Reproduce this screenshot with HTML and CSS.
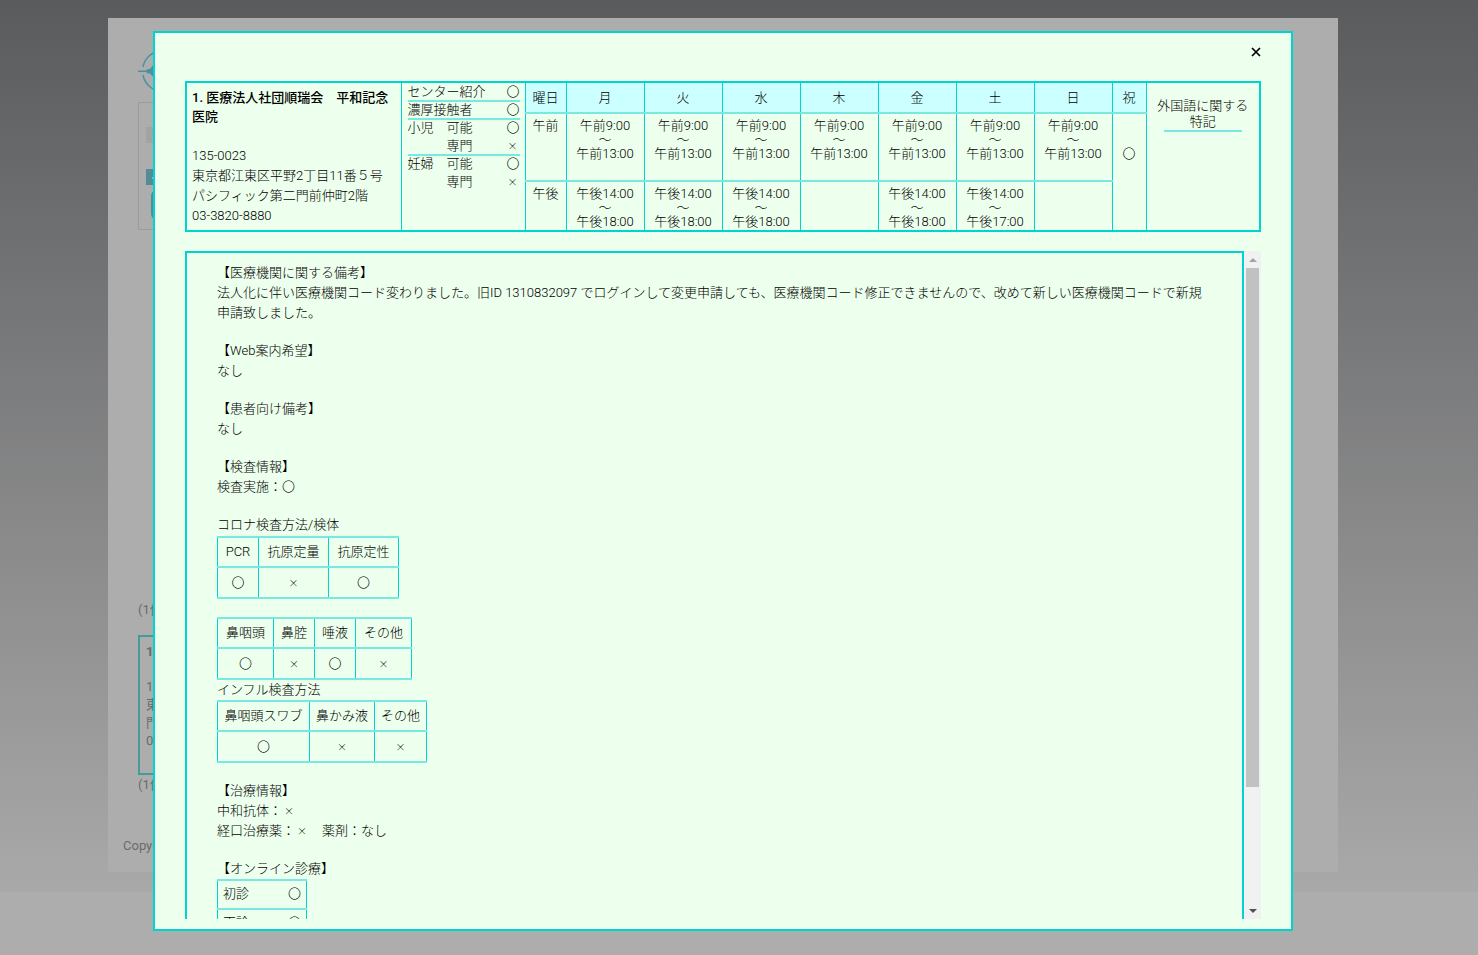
FILE: index.html
```html
<!DOCTYPE html>
<html lang="ja">
<head>
<meta charset="utf-8">
<title>診療・検査医療機関</title>
<link rel="stylesheet" href="styles.css">
</head>
<body>
<div class="backdrop">
  <div class="page">
    <header class="page-head">
      <svg class="logo" width="50" height="46" viewBox="0 0 50 46" aria-hidden="true">
        <path d="M5 19A20 20 0 0 1 21 3M29 3A20 20 0 0 1 45 19M45 27A20 20 0 0 1 29 43M21 43A20 20 0 0 1 5 27" fill="none" stroke="#4a92a0" stroke-width="1.5"/>
        <path d="M0 22.5H8L10 21H12L16 16V21.5L50 22.5V24L16 25V30L12 25.500H10L8 24H0Z" fill="#4a92a0"/>
      </svg>
    </header>
    <section class="filter">
      <div class="filter-tab"></div>
      <div class="filter-bar"><svg width="10" height="10" viewBox="0 0 10 10" aria-hidden="true"><path d="M1 6H8M4 3V9" stroke="#9fb4b9" stroke-width="2"/></svg></div>
      <div class="filter-pill"></div>
    </section>
    <p class="count">(1件</p>
    <section class="result">
      <strong>1. 医療</strong>
      <address>135-0023<br>東京都江東区<br>門前仲町2階<br>03-3820-8880</address>
    </section>
    <p class="count count-end">(1件</p>
    <footer class="copyright">Copyright</footer>
  </div>
</div>

<div class="overlay">
<div class="modal" role="dialog" aria-label="医療機関詳細">
  <div class="modal-head">
    <button class="close" type="button" aria-label="閉じる"><svg width="10" height="10" viewBox="0 0 10 10"><path d="M1 1L9 9M9 1L1 9" stroke="#000" stroke-width="1.7"/></svg></button>
  </div>

  <table class="schedule">
    <colgroup><col class="c-name"><col class="c-type"><col class="c-label"><col class="c-day" span="7"><col class="c-hol"><col class="c-lang"></colgroup>
    <tr class="r-head">
      <td class="clinic" rowspan="3"><strong>1. 医療法人社団順瑞会　平和記念医院</strong><address>135-0023<br>東京都江東区平野2丁目11番５号パシフィック第二門前仲町2階<br>03-3820-8880</address></td>
      <td class="types" rowspan="3">
        <dl>
          <div class="type line"><dt>センター紹介</dt><dd>〇</dd></div>
          <div class="type line"><dt>濃厚接触者</dt><dd>〇</dd></div>
          <div class="type"><dt>小児　可能</dt><dd>〇</dd></div>
          <div class="type line"><dt>　　　専門</dt><dd><i class="no">×</i></dd></div>
          <div class="type"><dt>妊婦　可能</dt><dd>〇</dd></div>
          <div class="type"><dt>　　　専門</dt><dd><i class="no">×</i></dd></div>
        </dl>
      </td>
      <th>曜日</th><th>月</th><th>火</th><th>水</th><th>木</th><th>金</th><th>土</th><th>日</th><th>祝</th>
      <td class="lang" rowspan="3">外国語に関する<br>特記</td>
    </tr>
    <tr class="r-am">
      <td class="time">午前</td>
      <td class="time">午前9:00<br>〜<br>午前13:00</td>
      <td class="time">午前9:00<br>〜<br>午前13:00</td>
      <td class="time">午前9:00<br>〜<br>午前13:00</td>
      <td class="time">午前9:00<br>〜<br>午前13:00</td>
      <td class="time">午前9:00<br>〜<br>午前13:00</td>
      <td class="time">午前9:00<br>〜<br>午前13:00</td>
      <td class="time">午前9:00<br>〜<br>午前13:00</td>
      <td class="time" rowspan="2"><br><br>〇</td>
    </tr>
    <tr class="r-pm">
      <td class="time">午後</td>
      <td class="time">午後14:00<br>〜<br>午後18:00</td>
      <td class="time">午後14:00<br>〜<br>午後18:00</td>
      <td class="time">午後14:00<br>〜<br>午後18:00</td>
      <td class="time"></td>
      <td class="time">午後14:00<br>〜<br>午後18:00</td>
      <td class="time">午後14:00<br>〜<br>午後17:00</td>
      <td class="time"></td>
    </tr>
  </table>

  <div class="scroller">
    <div class="detail">
      <section><h2>【医療機関に関する備考】</h2><p>法人化に伴い医療機関コード変わりました。旧ID 1310832097 でログインして変更申請しても、医療機関コード修正できませんので、改めて新しい医療機関コードで新規申請致しました。</p></section>
      <section><h2>【Web案内希望】</h2><p>なし</p></section>
      <section><h2>【患者向け備考】</h2><p>なし</p></section>
      <section><h2>【検査情報】</h2><p>検査実施：〇</p></section>
      <section>
        <p>コロナ検査方法/検体</p>
        <table class="grid">
          <colgroup><col class="w2"><col class="w4"><col class="w4"></colgroup>
          <tr><th>PCR</th><th>抗原定量</th><th>抗原定性</th></tr>
          <tr><td>〇</td><td><i class="no">×</i></td><td>〇</td></tr>
        </table>
      </section>
      <section>
        <table class="grid">
          <colgroup><col class="w3"><col class="w2"><col class="w2"><col class="w3"></colgroup>
          <tr><th>鼻咽頭</th><th>鼻腔</th><th>唾液</th><th>その他</th></tr>
          <tr><td>〇</td><td><i class="no">×</i></td><td>〇</td><td><i class="no">×</i></td></tr>
        </table>
        <p>インフル検査方法</p>
        <table class="grid grid-tight">
          <colgroup><col class="w6"><col class="w4"><col class="w3"></colgroup>
          <tr><th>鼻咽頭スワブ</th><th>鼻かみ液</th><th>その他</th></tr>
          <tr><td>〇</td><td><i class="no">×</i></td><td><i class="no">×</i></td></tr>
        </table>
      </section>
      <section><h2>【治療情報】</h2><p>中和抗体：<i class="no">×</i></p><p>経口治療薬：<i class="no">×</i>　薬剤：なし</p></section>
      <section>
        <h2>【オンライン診療】</h2>
        <table class="grid online">
          <tr><th>初診</th><td>〇</td></tr>
          <tr><th>再診</th><td>〇</td></tr>
        </table>
      </section>
    </div>
    <div class="scrollbar" aria-hidden="true">
      <span class="arrow up"></span>
      <span class="thumb"></span>
      <span class="rest"></span>
      <span class="arrow down"></span>
    </div>
  </div>
</div>
</div>
</body>
</html>
```
FILE: styles.css
```css
* { box-sizing: border-box; }
body {
  margin: 0;
  background: #adadad;
  color: #000;
  font: 300 13px/20px Roboto, "Noto Sans CJK JP", sans-serif;
}
h2, p, dl, dd { margin: 0; font: inherit; }
address, i { font-style: normal; }
strong { font-weight: 500; }

.backdrop {
  padding: 18px 140px 20px 108px;
  background: linear-gradient(#5a5b5d, #a9a9a9);
  color: #6b6b6b;
  font-weight: 400;
}
.page {
  height: 854px;
  padding: 30px 50% 0 30px;
  background: #adadad;
  overflow: hidden;
}
.page-head { height: 54px; }
.filter {
  height: 128px;
  padding: 24px 7px;
  border: 1px solid #9c9c9c;
}
.filter-tab { height: 16px; background: #a3a3a3; }
.filter-bar { height: 16px; margin-top: 26px; padding: 3px 5px; line-height: 10px; background: #548b97; }
.filter-pill {
  height: 30px;
  margin: 5px;
  border: 2px solid #548b97;
  border-radius: 6px;
}
.count { margin-top: 370px; }
.count-end { margin-top: 0; }
.result {
  height: 140px;
  margin-top: 15px;
  padding: 5px 6px;
  border: 2px solid #459b98;
}
.result strong { font-weight: 700; }
.result address { margin-top: 16px; line-height: 18px; }
.copyright { margin: 41px -15px; }

.overlay {
  position: fixed;
  inset: 0;
  padding: 31px 185px 24px 153px;
}
.modal {
  display: flex;
  flex-direction: column;
  height: 100%;
  padding: 0 30px 10px;
  border: 2px solid #00d4d0;
  background: #edffed;
}
.modal-head { display: flex; justify-content: flex-end; height: 48px; flex: none; }
.close {
  width: 20px;
  height: 20px;
  margin: 9px -5px 0 0;
  padding: 0;
  border: 0;
  background: none;
}

.schedule {
  width: 100%;
  table-layout: fixed;
  border-collapse: collapse;
  border: 2px solid #00d4d0;
  flex: none;
}
.schedule th, .schedule td {
  padding: 0;
  border: 1px solid #00d4d0;
  font-weight: inherit;
  vertical-align: top;
  text-align: center;
}
.schedule th { background: #ccffff; vertical-align: middle; border-bottom: 2px solid #78e9e0; }
.c-name { width: 215px; }
.c-type { width: 124px; }
.c-label { width: 41px; }
.c-hol { width: 34px; }
.c-lang { width: 114px; }
.r-head { height: 31px; }
.r-am { height: 68px; }
.r-pm { height: 50px; }
.r-am td:not(:last-child) { border-bottom: 2px solid #78e9e0; }
.schedule .time { padding-top: 5px; line-height: 14px; }
.schedule .clinic { padding: 5px 12px 0 5px; text-align: left; }
.clinic strong { display: block; line-height: 19px; }
.clinic address { margin-top: 20px; }
.schedule .types { padding: 1px 5px 0 6px; text-align: left; }
.type {
  display: flex;
  justify-content: space-between;
  line-height: 16px;
  border-bottom: 2px solid transparent;
}
.type.line { border-color: #78e9e0; }
.schedule .lang { padding-top: 15px; line-height: 16px; }
.lang::after {
  content: "";
  display: block;
  width: 78px;
  margin: 0 auto;
  border-top: 2px solid #78e9e0;
}

.scroller { display: flex; flex: 1; min-height: 0; margin-top: 19px; overflow: hidden; }
.detail {
  flex: 1;
  height: max-content;
  padding: 10px 36px 10px 30px;
  border: 2px solid #00d4d0;
}
section + section { margin-top: 18px; }
.grid { margin-top: 1px; border-collapse: collapse; table-layout: fixed; width: 1px; }
.grid th, .grid td {
  padding: 4px 0;
  border: 1px solid #00d4d0;
  border-top: 2px solid #78e9e0;
  border-bottom: 2px solid #78e9e0;
  font-weight: inherit;
  text-align: center;
  white-space: nowrap;
}
.grid td { padding-top: 5px; }
.w2 { width: 41px; }
.w3 { width: 56px; }
.w4 { width: 70px; }
.w6 { width: 92px; }
.grid-tight { margin-top: 0; }
.grid-tight .w3 { width: 52px; }
.grid-tight .w4 { width: 65px; }
.grid.online { width: 90px; margin-top: 0; }
.grid.online th, .grid.online td { padding: 3px 5px 4px; }
.grid.online th { border-right: 0; text-align: left; }
.grid.online td { border-left: 0; text-align: right; }
.no {
  display: inline-block;
  width: 14px;
  font: 300 10px/12px "Noto Sans CJK JP", sans-serif;
  text-align: center;
}

.scrollbar {
  display: flex;
  flex-direction: column;
  width: 17px;
  background: #f1f1f1;
  border-top-right-radius: 3px;
}
.arrow { display: grid; place-items: center; height: 17px; }
.arrow::before { content: ""; border: 4px solid transparent; }
.up::before { border-top: 0; border-bottom-color: #a3a3a3; }
.down::before { border-bottom: 0; border-top-color: #505050; }
.thumb { flex: 519; margin: 0 2px; background: #c1c1c1; }
.rest { flex: 115; }
```
